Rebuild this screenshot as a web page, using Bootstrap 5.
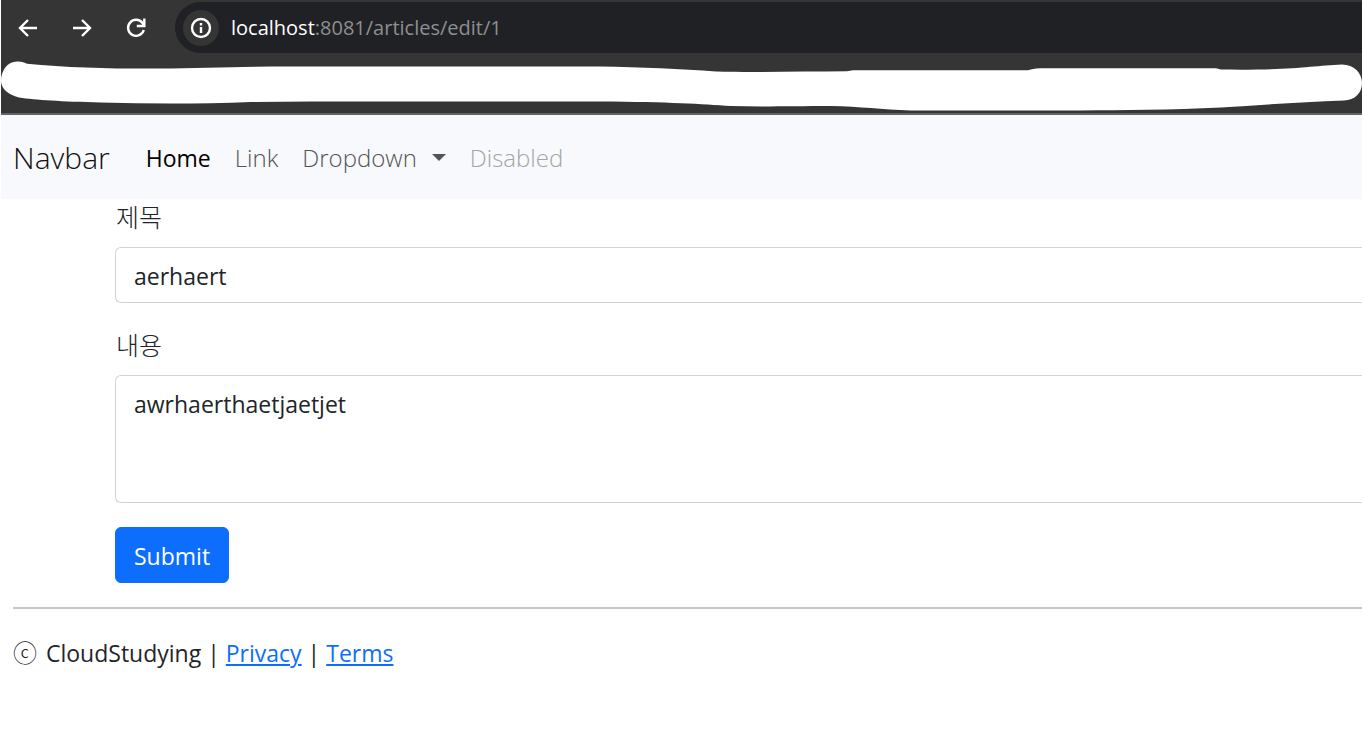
<!DOCTYPE html>
<html lang="ko">
<head>
<meta charset="utf-8">
<meta name="viewport" content="width=device-width, initial-scale=1">
<title>localhost:8081/articles/edit/1</title>
<link href="https://cdn.jsdelivr.net/npm/bootstrap@5.3.0/dist/css/bootstrap.min.css" rel="stylesheet">
<style>
  body { font-family: "Open Sans", "Noto Sans CJK KR", sans-serif; font-size: 23px; line-height: 36px; padding: 0 2px 0 1px; overflow-x: hidden; }
  .browser-top { background: #353535; border-bottom: 2px solid #636363; }
  .tool-row { padding-top: 2px; }
  .tool-btn { width: 54px; height: 51px; }
  .tool-btn svg { width: 24px; height: 24px; fill: none; stroke: #fff; stroke-width: 2.4; }
  .address { background: #202124; height: 51px; border-radius: 26px 0 0 26px; padding-left: 8px; margin-left: 12px; }
  .site-info { width: 36px; height: 36px; background: #353535; }
  .url-box { font-size: 20px; line-height: 28px; margin-left: 12px; color: #8e8f91; }
  .url-box span { color: #fff; }
  .scribble { height: 60px; }
  .site-nav { background: #f8f9fc; padding: 13px 12px 11px; }
  .site-nav .navbar-brand { font-size: 30px; line-height: 44px; padding: 8px 0; margin-right: 24px; font-weight: 300; color: #111; }
  .site-nav .navbar-nav .nav-link { font-size: 24px; line-height: 36px; padding: 12px; font-weight: 300; color: #555; }
  .site-nav .navbar-nav .nav-link.active { color: #000; font-size: 23px; font-weight: 400; }
  .site-nav .navbar-nav .nav-link.disabled { color: #a5a5a5; }
  .site-nav .dropdown-toggle::after { border-width: 7px 7px 0; margin-left: 15px; vertical-align: 6px; }
  .article-form { margin-left: 114px; }
  .article-form .form-label { display: block; margin-bottom: 12px; padding-left: 1px; font-size: 25px; font-weight: 300; }
  .article-form .form-control { font-size: 23px; line-height: 36px; padding: 10px 18px 8px; border-color: #ced4da; border-radius: 6px 0 0 6px; border-right: 0; resize: none; display: block; color: #212529; }
  .field { margin-bottom: 24px; }
  .article-form .btn { font-size: 23px; line-height: 36px; padding: 10px 18px 8px; border-radius: 6px; display: block; }
  .page-foot { margin-left: 12px; }
  .page-foot hr { margin: 24px 0 26px; border-top: 2px solid #c8c8c8; opacity: 1; }
  .page-foot a { color: #0d6efd; }
  .copy-sign { font-size: 24px; font-weight: 300; margin-right: 3px; line-height: 1; }
</style>
</head>
<body>
<header class="browser-top">
  <div class="tool-row d-flex align-items-center">
    <button class="tool-btn btn p-0 border-0 d-flex align-items-center justify-content-center" aria-label="Back"><svg viewBox="0 0 24 24"><path d="M21 12H4.500M12 4l-8 8 8 8"/></svg></button>
    <button class="tool-btn btn p-0 border-0 d-flex align-items-center justify-content-center" aria-label="Forward"><svg viewBox="0 0 24 24"><path d="M3 12h16.500M12 4l8 8-8 8"/></svg></button>
    <button class="tool-btn btn p-0 border-0 d-flex align-items-center justify-content-center" aria-label="Reload"><svg viewBox="0 0 24 24"><path d="M19.800 14A8 8 0 1 1 18.500 7l1.500 2M20.300 2.500V10h-7.500"/></svg></button>
    <div class="address flex-grow-1 d-flex align-items-center">
      <button class="site-info btn p-0 border-0 rounded-circle d-flex align-items-center justify-content-center" aria-label="Site information"><svg width="22" height="22" viewBox="0 0 22 22" fill="none" stroke="#fff" stroke-width="2.400"><circle cx="11" cy="11" r="9"/><path d="M11 10v6M11 6v2.400"/></svg></button>
      <div class="url-box"><span>localhost</span>:8081/articles/edit/1</div>
    </div>
  </div>
  <svg class="scribble d-block w-100" viewBox="0 0 1361 60" preserveAspectRatio="none" fill="#fff" aria-hidden="true"><path d="M0 28C0 17 7 8 17 8.500c4 0 7 1.500 9 2.200C70 15 120 16 170 15.500L270 13.500H599C640 14 680 16 715 18.500C750 19.500 800 18.500 846 18.300L852 17.300H1027C1032 15.500 1038 15.300 1045 15.300H1215L1220 16.500C1290 17.500 1310 13 1341 11.500C1353 11.500 1361 20 1361 30S1354 47 1343 47.500C1300 49 1260 52 1220 54.500C1170 57 1120 57 1080 57.500H910C880 56.500 860 53.500 830 53C790 53 760 54 730 53C700 51 670 49 599 48.500H310L250 49C200 51 150 51 100 49.500C60 48.500 35 47 18 44.500C7 42 0 35 0 28Z"/></svg>
</header>

<nav class="site-nav navbar navbar-expand">
  <a class="navbar-brand" href="#">Navbar</a>
  <ul class="navbar-nav">
    <li class="nav-item"><a class="nav-link active" aria-current="page" href="#">Home</a></li>
    <li class="nav-item"><a class="nav-link" href="#">Link</a></li>
    <li class="nav-item dropdown"><a class="nav-link dropdown-toggle" href="#" role="button" data-bs-toggle="dropdown" aria-expanded="false">Dropdown</a></li>
    <li class="nav-item"><a class="nav-link disabled" href="#" aria-disabled="true">Disabled</a></li>
  </ul>
</nav>

<form class="article-form">
  <div class="field">
    <label class="form-label" for="title">제목</label>
    <input type="text" class="form-control" id="title" value="aerhaert">
  </div>
  <div class="field">
    <label class="form-label" for="content">내용</label>
    <textarea class="form-control" id="content" rows="3">awrhaerthaetjaetjet</textarea>
  </div>
  <button type="submit" class="btn btn-primary">Submit</button>
</form>

<footer class="page-foot">
  <hr>
  <p class="mb-0"><span class="copy-sign">ⓒ</span> CloudStudying | <a href="#">Privacy</a> | <a href="#">Terms</a></p>
</footer>
<script src="https://cdn.jsdelivr.net/npm/bootstrap@5.3.0/dist/js/bootstrap.bundle.min.js"></script>
</body>
</html>
